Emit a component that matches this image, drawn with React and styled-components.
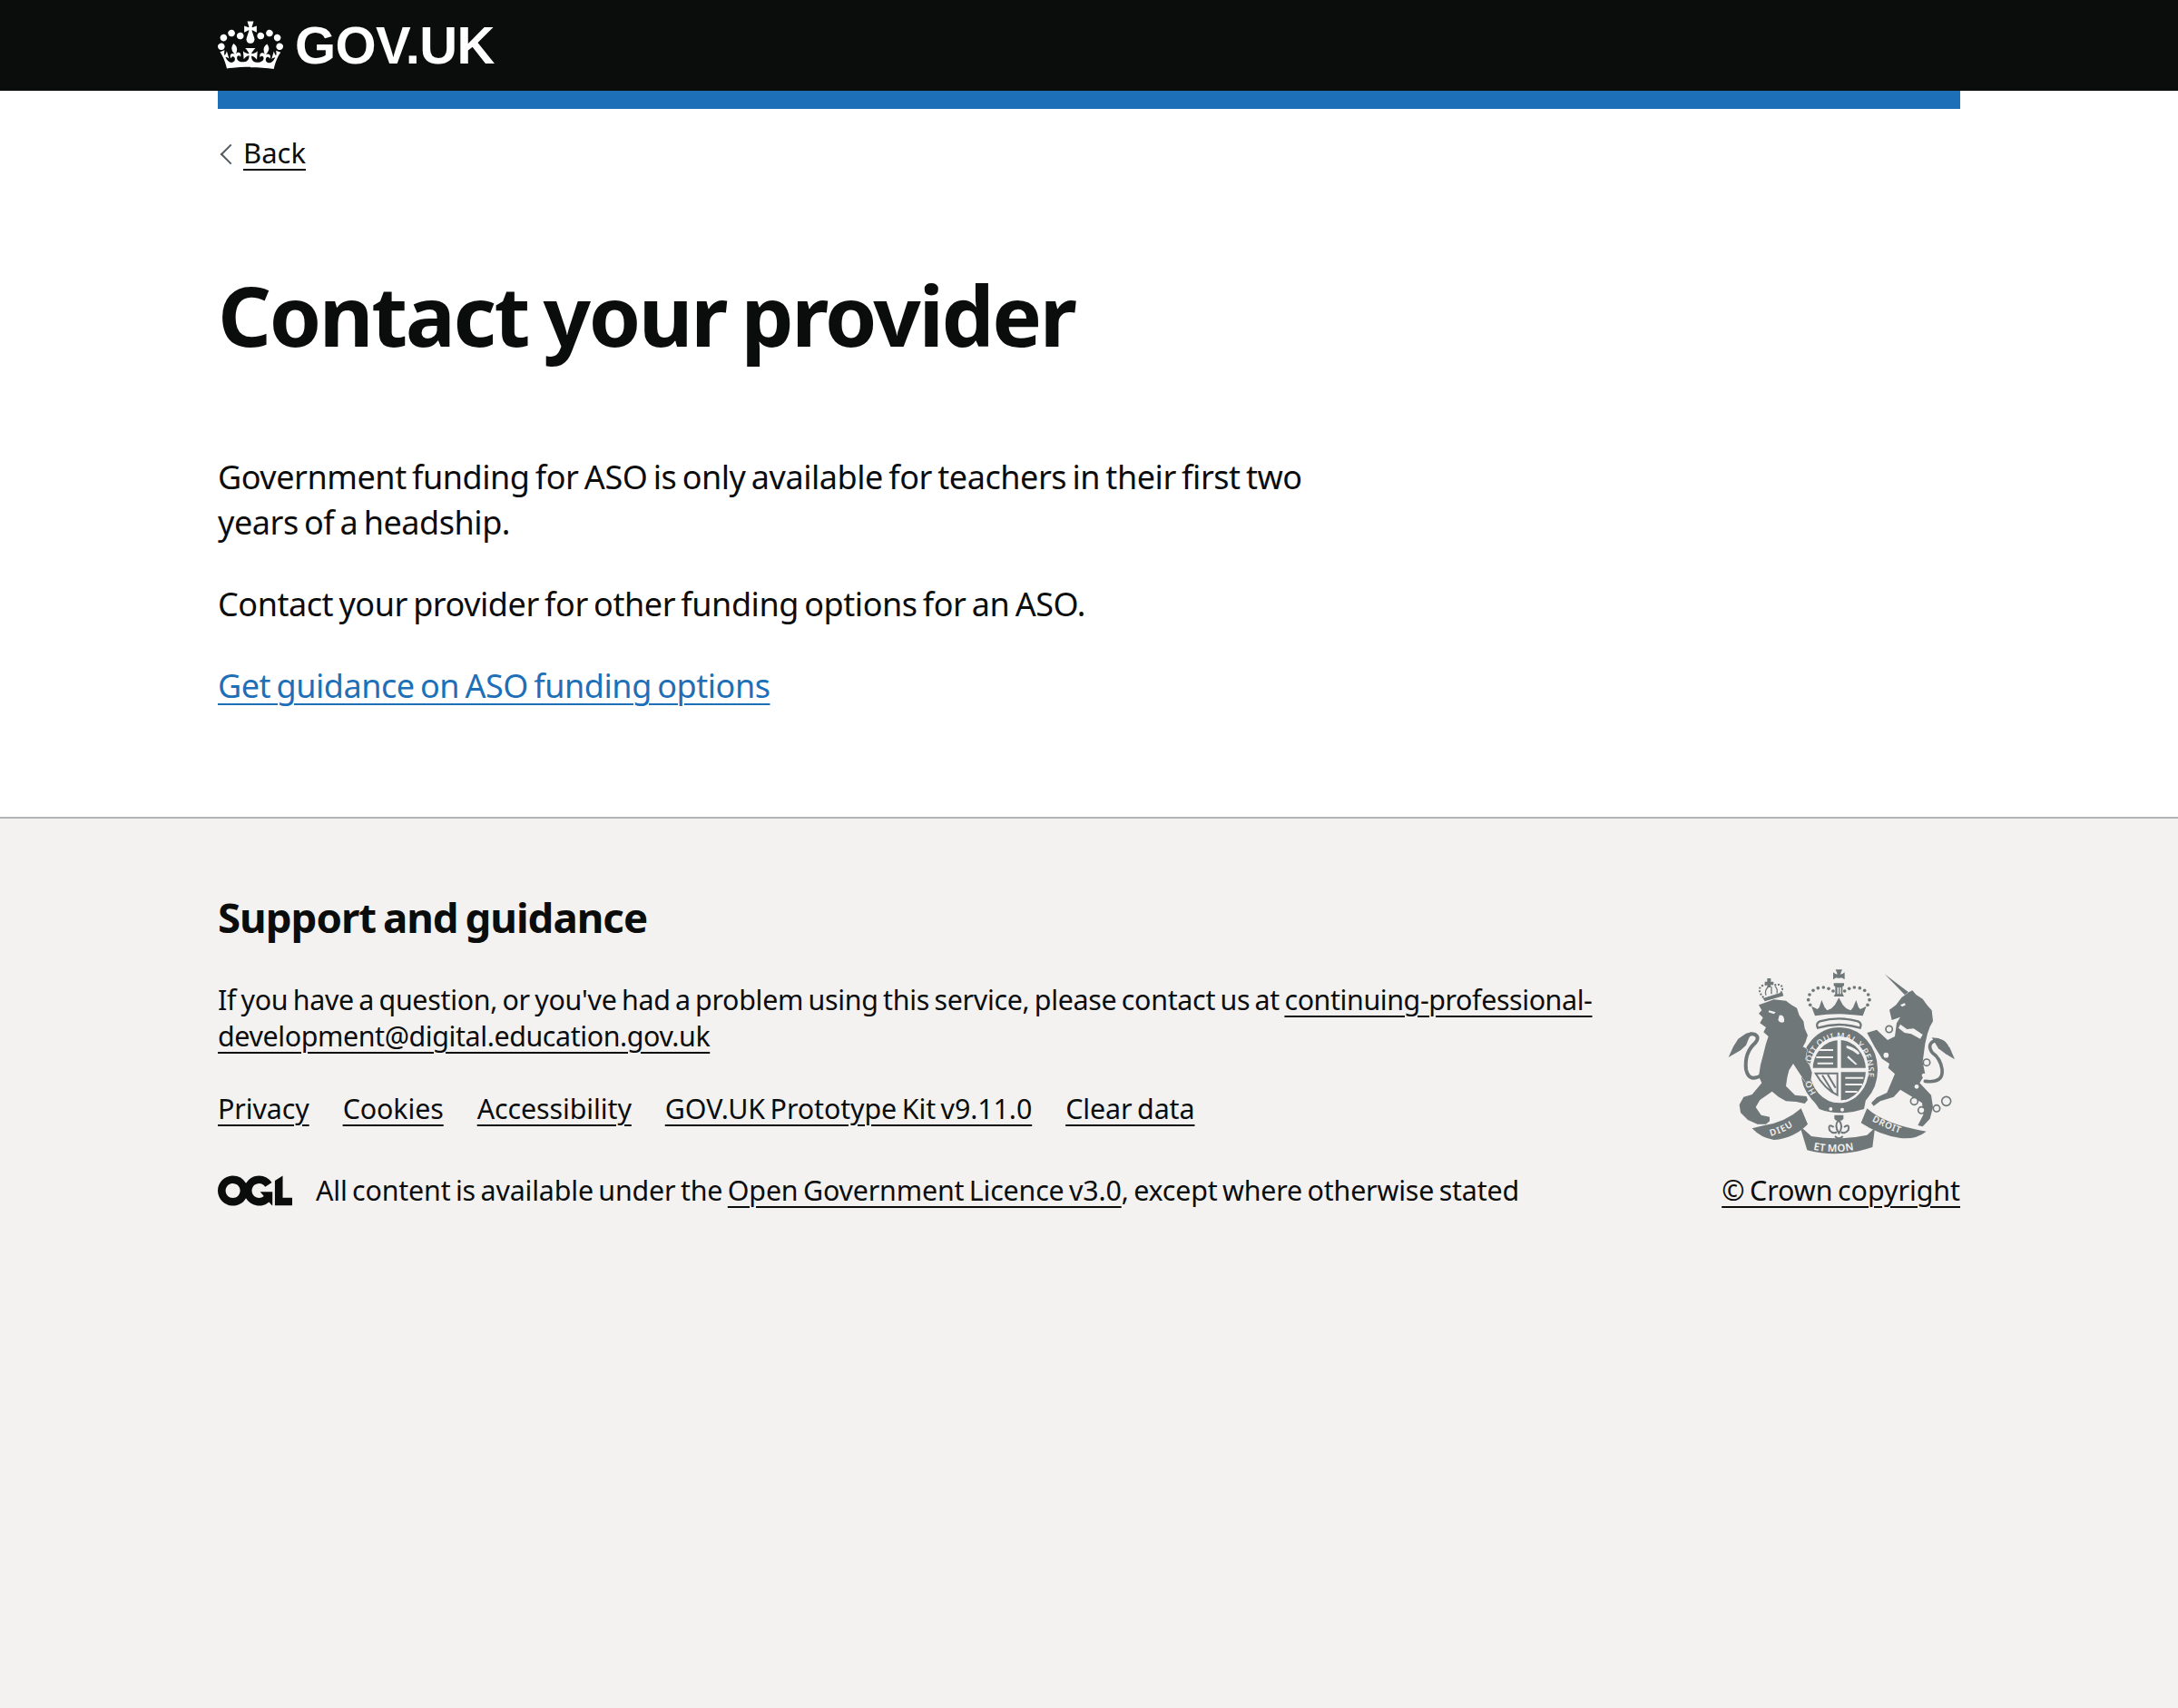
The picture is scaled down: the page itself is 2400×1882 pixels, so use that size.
import React from 'react';
import styled, {createGlobalStyle} from 'styled-components';

const FONT = '"Noto Sans", "Liberation Sans", Arial, sans-serif';
const INK = '#0b0c0c';

const GlobalStyle = createGlobalStyle`
  html, body {
    margin: 0;
    padding: 0;
    height: 100%;
  }
  body {
    font-family: ${FONT};
    color: ${INK};
    background: #f3f2f1;
  }
  #root {
    min-height: 100%;
  }
`;

const Page = styled.div`
  min-height: 1882px;
  display: flex;
  flex-direction: column;
`;

const Header = styled.header`
  background: ${INK};
  border-bottom: 20px solid #fff;
`;

const HeaderContainer = styled.div`
  width: 1920px;
  height: 100px;
  margin: 0 auto -20px;
  border-bottom: 20px solid #1d70b8;
  display: flex;
  align-items: center;
  gap: 13px;
`;

const Logotype = styled.span`
  font-family: "Liberation Sans", Arial, sans-serif;
  font-weight: 700;
  font-size: 58px;
  line-height: 100px;
  letter-spacing: -0.6px;
  color: #fff;
`;

const MainArea = styled.div`
  background: #fff;
  padding-bottom: 79px;
`;

const Width = styled.div`
  width: 1920px;
  margin: 0 auto;
`;

const BackLink = styled.a`
  display: inline-block;
  position: relative;
  margin: 28px 0 32px;
  padding-left: 28px;
  font-size: 31px;
  line-height: 40px;
  color: ${INK};
  text-decoration: underline;
  text-decoration-thickness: 2px;
  text-underline-offset: 6px;

  &::before {
    content: "";
    position: absolute;
    left: 6px;
    top: 14px;
    width: 14px;
    height: 14px;
    border-left: 2px solid #505a5f;
    border-top: 2px solid #505a5f;
    transform: rotate(-45deg);
  }
`;

const Heading = styled.h1`
  margin: 77px 0 104px;
  font-size: 92px;
  line-height: 100px;
  font-weight: 700;
  letter-spacing: -2.4px;
  word-spacing: -5px;
`;

const Body = styled.div`
  width: 1250px;
`;

const Paragraph = styled.p`
  margin: 0 0 40px;
  font-size: 36px;
  line-height: 50px;
  letter-spacing: -0.45px;
  word-spacing: -2.6px;
`;

const BlueLink = styled.a`
  color: #1d70b8;
  text-decoration: underline;
  text-decoration-thickness: 2px;
  text-underline-offset: 6px;
`;

const Footer = styled.footer`
  flex: 1;
  background: #f3f2f1;
  border-top: 2px solid #b1b4b6;
  padding-top: 78px;
  font-size: 30.4px;
  line-height: 40px;
  letter-spacing: -0.3px;
  word-spacing: -2.2px;
`;

const FooterColumns = styled.div`
  display: flex;
  justify-content: space-between;
  align-items: flex-end;
`;

const FooterLeft = styled.div`
  width: 1600px;
`;

const FooterHeading = styled.h2`
  margin: 0 0 42px;
  font-size: 45.6px;
  line-height: 60px;
  font-weight: 700;
  letter-spacing: -1px;
  word-spacing: -3px;
`;

const FooterText = styled.p`
  margin: 0 0 40px;
`;

const FooterLink = styled.a`
  color: ${INK};
  text-decoration: underline;
  text-decoration-thickness: 2px;
  text-underline-offset: 6px;
`;

const EmailLink = styled(FooterLink)`
  letter-spacing: -0.4px;
`;

const MetaList = styled.ul`
  display: flex;
  gap: 37px;
  list-style: none;
  margin: 0 0 50px;
  padding: 0;
  letter-spacing: -0.1px;
`;

const LicenceRow = styled.div`
  display: flex;
  align-items: center;
  gap: 26px;
  letter-spacing: -0.18px;
`;

const CopyrightBlock = styled.div`
  display: flex;
  flex-direction: column;
  align-items: center;
  gap: 20px;
  letter-spacing: -0.05px;
`;

function Crown() {
  return (
    <svg viewBox="0 0 132 97" width="72" height="60">
      <path fill="#fff" fillRule="evenodd" d="M25 30.2c3.5 1.5 7.7-.2 9.1-3.7 1.5-3.6-.2-7.8-3.9-9.2-3.6-1.4-7.6.3-9.1 3.9-1.4 3.5.3 7.5 3.9 9zM9 39.5c3.6 1.5 7.8-.2 9.2-3.7 1.5-3.6-.2-7.8-3.9-9.1-3.6-1.5-7.6.2-9.1 3.8-1.4 3.5.3 7.5 3.8 9zM4.4 57.2c3.5 1.5 7.7-.2 9.1-3.8 1.5-3.6-.2-7.7-3.9-9.1-3.5-1.5-7.6.3-9.1 3.8-1.4 3.5.3 7.6 3.9 9.1zm38.3-21.4c3.5 1.5 7.7-.2 9.1-3.8 1.5-3.6-.2-7.7-3.9-9.1-3.6-1.5-7.6.3-9.1 3.8-1.3 3.6.4 7.7 3.9 9.1zm64.4-5.6c-3.6 1.5-7.8-.2-9.1-3.7-1.5-3.6.2-7.8 3.8-9.2 3.6-1.4 7.7.3 9.2 3.9 1.3 3.5-.4 7.5-3.9 9zm15.9 9.3c-3.6 1.5-7.7-.2-9.1-3.7-1.5-3.6.2-7.8 3.7-9.1 3.6-1.5 7.7.2 9.2 3.8 1.5 3.5-.3 7.5-3.8 9zm4.7 17.7c-3.6 1.5-7.8-.2-9.2-3.8-1.5-3.6.2-7.7 3.9-9.1 3.6-1.5 7.7.3 9.2 3.8 1.3 3.5-.4 7.6-3.9 9.1zM89.3 35.8c-3.6 1.5-7.8-.2-9.2-3.8-1.4-3.6.2-7.7 3.9-9.1 3.6-1.5 7.7.3 9.2 3.8 1.4 3.6-.3 7.7-3.9 9.1zM69.7 17.7l8.9 4.7V9.3l-8.9 2.8c-.2-.3-.5-.6-.9-.9L72.4 0H59.6l3.5 11.2c-.3.3-.6.5-.9.9l-8.8-2.8v13.1l8.8-4.7c.3.3.6.7.9.9l-5 15.4v.1c-.2.8-.4 1.6-.4 2.4 0 4.1 3.1 7.5 7 8.1h.2c.3 0 .7.1 1 .1.4 0 .7 0 1-.1h.2c4-.6 7.1-4.1 7.1-8.1 0-.8-.1-1.7-.4-2.4V34l-5.1-15.4c.4-.2.7-.6 1-.9zM66 92.8c16.9 0 32.8 1.1 47.1 3.2 4-16.9 8.9-26.7 14-33.5l-9.6-3.4c1 4.9 1.1 7.2 0 10.2-1.5-1.4-3-4.3-4.2-8.7L108.6 76c2.8-2 5-3.2 7.5-3.3-4.4 9.4-10 11.9-13.6 11.2-4.3-.8-6.3-4.6-5.6-7.9 1-4.7 5.7-5.9 8-.5 4.3-8.7-3-11.4-7.6-8.8 7.1-7.2 7.9-13.5 2.1-21.1-8 6.1-8.1 12.3-4.5 20.8-4.7-5.4-12.1-2.5-9.5 6.2 3.4-5.2 7.9-2 7.2 3.1-.6 4.3-6.4 7.8-13.5 7.2-10.3-.9-10.9-8-11.2-13 2.5-.5 7.1 1.8 11 7.3L80.2 60c-4.1 4.4-8 5.3-12.3 5.4 1.4-4.4 8-11.6 8-11.6H55.5s6.4 7.2 7.9 11.6c-4.2-.1-8-1-12.3-5.4l1.4 16.4c3.9-5.5 8.5-7.7 10.9-7.3-.3 5-1 12.1-11.1 13-7.2.6-12.9-2.9-13.5-7.2-.7-5 3.8-8.3 7.1-3.1 2.7-8.7-4.6-11.6-9.4-6.2 3.7-8.5 3.6-14.7-4.6-20.8-5.8 7.6-5 13.9 2.2 21.1-4.7-2.6-11.9.1-7.7 8.8 2.3-5.5 7.1-4.2 8.1.5.7 3.3-1.3 7.1-5.7 7.9-3.5.7-9-1.8-13.5-11.2 2.5.1 4.7 1.3 7.5 3.3l-4.7-15.4c-1.2 4.4-2.7 7.2-4.3 8.7-1.1-3-.9-5.3 0-10.2l-9.5 3.4c5 6.9 9.9 16.7 14 33.5 14.8-2.1 30.8-3.2 47.7-3.2z" />
    </svg>
  );
}

function OglLogo() {
  return (
    <svg viewBox="0 0 483.2 195.7" width="82" height="34">
      <path fill={INK} d="M421.5 142.8V.1l-50.7 32.3v161.1h112.4v-50.7zm-122.3-9.6A47.12 47.12 0 0 1 221 97.8c0-26 21.1-47.1 47.1-47.1 16.7 0 31.4 8.7 39.7 21.8l42.7-27.2A97.63 97.63 0 0 0 268.1 0c-36.5 0-68.3 20.1-85.1 49.7A98 98 0 0 0 97.8 0C43.9 0 0 43.9 0 97.8s43.9 97.8 97.8 97.8c36.5 0 68.3-20.1 85.1-49.7a97.76 97.76 0 0 0 149.6 25.4l19.4 22.2h3v-87.8h-80l24.3 27.5zM97.8 145c-26 0-47.1-21.1-47.1-47.1s21.1-47.1 47.1-47.1 47.2 21 47.2 47S123.8 145 97.8 145" />
    </svg>
  );
}

// drawn in the coordinates of the 3x crop, so numbers can be read straight off it
function RoyalArms() {
  const grey = '#6f7779';
  const bg = '#f3f2f1';
  const dots = [[342,172],[336,155],[340,138],[352,124],[368,116],[386,114],[403,118],[418,126],[456,126],[471,118],[488,114],[506,116],[522,124],[534,138],[538,155],[532,172]];
  const links = [[603,252,11],[593,338,11],[727,362,11],[686,490,12],[710,520,11],[760,514,11],[792,490,15]];
  return (
    <svg viewBox="70 55 750 610" width="250" height="204">
      <defs>
        <path id="garter" d="M362 462 A96 110 0 1 1 512 462" />
        <path id="ribLeft" d="M212 606 Q272 590 322 545" />
        <path id="ribMid" d="M352 650 Q437 668 525 642" />
        <path id="ribRight" d="M545 555 Q610 590 668 605" />
        <clipPath id="shieldClip">
          <ellipse cx="438" cy="388" rx="88" ry="100" />
        </clipPath>
      </defs>

      {/* crown */}
      <path fill={grey} d="M426 55h22l-5 12v4l7-3 6-4v24l-6-4-7-3v2h-12v-2l-7 3-6 4V64l6 4 7 3v-4z" />
      <path fill={grey} d="M420 100h34v8l-5 4v22l5 10h-34l5-10v-22l-5-4z" />
      <path fill={bg} d="M432 114h4v22h-4zM440 114h4v22h-4z" />
      {dots.map(([x, y]) => <circle key={x + '-' + y} cx={x} cy={y} r="5.5" fill={grey} />)}
      <path fill={grey} d="M358 208 L346 176 L366 186 L372 180 L380 156 L390 180 L398 190 L412 184 L424 172 L437 148 L450 172 L462 184 L476 190 L484 180 L494 156 L502 180 L508 186 L528 176 L516 208 Q437 196 358 208z" />
      <path fill="none" stroke={grey} strokeWidth="7" d="M367 248 Q360 232 374 226 Q437 208 500 226 Q514 232 507 248 Q437 226 367 248z" />

      {/* garter and shield */}
      <ellipse cx="438" cy="386" rx="112" ry="125" fill={bg} stroke={grey} strokeWidth="30" />
      <text fontFamily={FONT} fontSize="28" fontWeight="500" fill={bg} letterSpacing="1.5">
        <textPath href="#garter">HONI SOIT QUI MAL Y PENSE</textPath>
      </text>
      <g clipPath="url(#shieldClip)">
        <path fill={grey} d="M350 288h82v92h-82z M444 288h94v92h-94z M444 394h94v94h-94z" />
        <path fill={bg} d="M366 318h52v6h-52zM362 342h56v6h-56zM366 362h52v6h-52zM462 306q30 6 44 26l-6 4q-16-14-38-22zM468 340l30 28-6 2-28-24zM458 410h60v6h-60zM458 432h56v6h-56zM458 456h40v6h-40z" />
        <path fill="none" stroke={grey} strokeWidth="6" d="M360 398 L432 398 L432 470 Q390 450 360 398z M382 404 L418 462 M400 402 L426 446" />
      </g>
      <path fill={grey} d="M352 486 Q440 540 526 486 L520 516 Q440 542 372 516z" />
      <circle cx="410" cy="516" r="6" fill={bg} />
      <circle cx="448" cy="518" r="6" fill={bg} />

      {/* lion crown */}
      <path fill="none" stroke={grey} strokeWidth="6" strokeDasharray="6 5" d="M188 148 Q166 124 180 110 Q210 98 226 106 Q252 100 250 122 L244 136" />
      <path fill="none" stroke={grey} strokeWidth="4" d="M196 140 Q190 124 204 112 M232 134 Q236 120 226 110 M214 136 V112" />
      <path fill={grey} d="M186 150 L250 130 L254 142 L192 160z M200 84h12v11h9v10h-9v9h-12v-9h-8v-10h8z" />

      {/* lion */}
      <path fill={grey} stroke={bg} strokeWidth="3" paintOrder="stroke" d="M172 172 L200 162 L222 154 L262 158 L280 172 L298 182 L306 206 L320 226 L324 250 L334 272 L326 296 L318 310 L332 318 L326 352 L340 372 L348 396 L344 422 L326 426 L308 400 L286 366 L272 388 L266 412 L262 440 L292 470 L330 474 L334 486 L324 498 L296 492 L262 490 L238 476 L216 458 L176 486 L162 510 L180 536 L208 542 L208 556 L196 566 L168 566 L136 552 L112 528 L108 502 L122 476 L150 468 L182 430 L172 408 L178 370 L186 340 L196 300 L204 276 L188 262 L196 246 L176 232 L186 214 L172 200 L182 190z" />
      <path fill="none" stroke={grey} strokeWidth="12" strokeLinecap="round" d="M182 404 Q140 430 130 385 Q124 330 160 298 Q176 280 160 270 Q138 262 130 285" />
      <path fill={grey} d="M72 345 L88 310 L104 284 L130 266 L148 262 L136 290 L130 305 L112 322 L94 332z" />
      <path fill={bg} d="M206 190l22 6-6 6-18-6zM240 206q18-4 16 22q-14 6-20-6z" />

      {/* unicorn */}
      <path fill={grey} d="M588 70 L670 132 L658 142z" />
      <path fill={grey} stroke={bg} strokeWidth="3" paintOrder="stroke" d="M604 188 L626 172 L644 148 L668 130 L680 124 L692 138 L714 152 L728 172 L744 190 L748 226 L738 244 L730 266 L722 300 L714 360 L722 400 L704 430 L742 470 L748 510 L738 548 L714 574 L698 570 L716 535 L712 496 L670 470 L640 452 L618 476 L574 490 L552 506 L544 496 L562 478 L596 462 L622 400 L600 380 L604 366 L580 350 L556 312 L530 264 L562 254 L598 288 L622 276 L628 232 L640 212 L612 222z" />
      <path fill={bg} d="M640 236 L662 252 L684 250 L714 270 L706 284 L676 268 L654 264 L634 248z" />
      <path fill={bg} d="M640 172l14-6 4 6-12 6z" />
      {links.map(([x, y, r]) => <circle key={x} cx={x} cy={y} r={r} fill={bg} stroke={grey} strokeWidth="5" />)}
      <circle cx="718" cy="405" r="7" fill={bg} />
      <circle cx="694" cy="442" r="7" fill={bg} />
      <path fill="none" stroke={grey} strokeWidth="11" strokeLinecap="round" d="M722 424 Q784 432 778 384 Q772 348 746 330 Q726 302 754 290 Q778 284 792 306" />
      <path fill={grey} d="M820 352 L804 314 L788 294 L766 282 L744 280 L766 316 L790 334z" />

      {/* motto ribbon */}
      <path fill={grey} d="M150 580 L190 570 Q260 560 312 514 L334 566 Q290 612 222 618 Q180 612 150 580z" />
      <path fill={grey} d="M308 572 Q338 598 346 606 Q437 622 530 602 L556 578 L548 642 Q437 680 332 652z" />
      <path fill={grey} d="M510 562 L530 514 Q590 568 726 590 Q690 618 640 612 Q570 602 510 562z" />
      <text fontFamily={FONT} fontSize="30" fontWeight="600" fill={bg} letterSpacing="3">
        <textPath href="#ribLeft">DIEU</textPath>
      </text>
      <text fontFamily={FONT} fontSize="34" fontWeight="600" fill={bg} letterSpacing="1">
        <textPath href="#ribMid">ET MON</textPath>
      </text>
      <text fontFamily={FONT} fontSize="30" fontWeight="600" fill={bg} letterSpacing="2">
        <textPath href="#ribRight">DROIT</textPath>
      </text>

      {/* fleur de lis */}
      <path fill={grey} d="M422 536h30v12l-6 6h-18l-6-6z" />
      <path fill="none" stroke={grey} strokeWidth="6" d="M436 552 Q454 572 437 596 Q420 572 436 552z M420 576 Q400 562 406 586 Q418 600 430 592 M454 576 Q474 562 468 586 Q456 600 444 592 M424 606 Q437 620 450 606" />
    </svg>
  );
}

export default function App() {
  return (
    <Page>
      <GlobalStyle />
      <Header>
        <HeaderContainer>
          <Crown />
          <Logotype>GOV.UK</Logotype>
        </HeaderContainer>
      </Header>
      <MainArea>
        <Width>
          <BackLink href="#">Back</BackLink>
          <Heading>Contact your provider</Heading>
          <Body>
            <Paragraph>Government funding for ASO is only available for teachers in their first two years of a headship.</Paragraph>
            <Paragraph>Contact your provider for other funding options for an ASO.</Paragraph>
            <Paragraph><BlueLink href="#">Get guidance on ASO funding options</BlueLink></Paragraph>
          </Body>
        </Width>
      </MainArea>
      <Footer>
        <Width>
          <FooterColumns>
            <FooterLeft>
              <FooterHeading>Support and guidance</FooterHeading>
              <FooterText>
                If you have a question, or you've had a problem using this service, please contact us at{' '}
                <EmailLink href="#">continuing-professional-development@digital.education.gov.uk</EmailLink>
              </FooterText>
              <MetaList>
                <li><FooterLink href="#">Privacy</FooterLink></li>
                <li><FooterLink href="#">Cookies</FooterLink></li>
                <li><FooterLink href="#">Accessibility</FooterLink></li>
                <li><FooterLink href="#">GOV.UK Prototype Kit v9.11.0</FooterLink></li>
                <li><FooterLink href="#">Clear data</FooterLink></li>
              </MetaList>
              <LicenceRow>
                <OglLogo />
                <span>All content is available under the <FooterLink href="#">Open Government Licence v3.0</FooterLink>, except where otherwise stated</span>
              </LicenceRow>
            </FooterLeft>
            <CopyrightBlock>
              <RoyalArms />
              <FooterLink href="#">© Crown copyright</FooterLink>
            </CopyrightBlock>
          </FooterColumns>
        </Width>
      </Footer>
    </Page>
  );
}
